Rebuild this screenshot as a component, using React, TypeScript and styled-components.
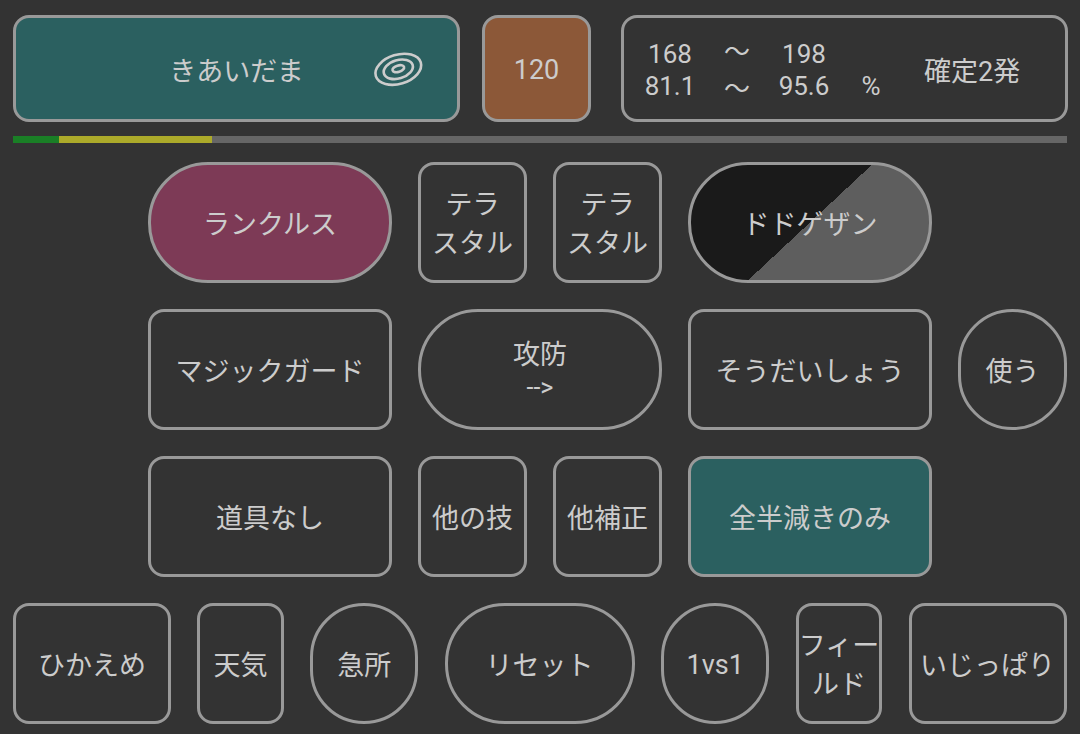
import React from "react";
import styled, { createGlobalStyle } from "styled-components";

const Global = createGlobalStyle`
  html, body { margin: 0; padding: 0; background: #333333; }
  body { font-family: Roboto, "Noto Sans CJK JP", sans-serif; color: #cccccc; }
  * { box-sizing: border-box; }
`;

const Page = styled.div`
  width: 1080px;
  height: 734px;
  padding: 15px 13px 0;
  display: flex;
  flex-direction: column;
  overflow: hidden;
`;

const TopRow = styled.div`
  display: flex;
  height: 107px;
`;

const Row = styled.div<{ $indent?: number; $gap?: number }>`
  display: flex;
  height: 121px;
  gap: ${(p) => p.$gap ?? 26}px;
  margin-top: 26px;
  padding-left: ${(p) => p.$indent ?? 0}px;
`;

const Button = styled.div<{ $w: number; $round?: boolean; $bg?: string; $pt?: number }>`
  flex: none;
  width: ${(p) => p.$w}px;
  height: 100%;
  padding-top: ${(p) => p.$pt ?? 6}px;
  border: 3px solid #999999;
  border-radius: ${(p) => (p.$round ? "60px" : "16px")};
  background: ${(p) => p.$bg ?? "transparent"};
  display: flex;
  align-items: center;
  justify-content: center;
  text-align: center;
  white-space: nowrap;
  font-size: 27px;
  line-height: 39px;
  color: #cccccc;
`;

const MoveButton = styled(Button)`
  position: relative;
`;

const MoveIcon = styled.svg`
  position: absolute;
  left: 356px;
  top: 33px;
  width: 52px;
  height: 38px;
`;

const PowerButton = styled(Button)`
  margin-left: 22px;
`;

const DamagePanel = styled(Button)`
  margin-left: 30px;
  justify-content: flex-start;
`;

const DamageGrid = styled.div`
  display: grid;
  grid-template-columns: repeat(4, 67px);
  margin-left: 12.5px;
  font-size: 26px;
  line-height: 32px;
`;

const Cell = styled.span`
  text-align: center;
`;

const Wave = styled(Cell)<{ $dy: number }>`
  transform: translateY(${(p) => p.$dy}px);
`;

const Verdict = styled.span`
  margin-left: 19.5px;
  padding-top: 6px;
`;

const HpBar = styled.div`
  display: flex;
  height: 7px;
  margin-top: 14px;
  margin-bottom: -7px;
  background: #666666;
`;

const HpSegment = styled.div<{ $w: number; $c: string }>`
  width: ${(p) => p.$w}px;
  background: ${(p) => p.$c};
`;

const Stack = styled.div`
  display: flex;
  flex-direction: column;
  align-items: center;
  margin-top: -5px;
`;

const ArrowLine = styled.span`
  margin-top: -1px;
  font-size: 25px;
  line-height: 28px;
`;

const SplitButton = styled(Button)`
  background: linear-gradient(137deg, #1a1a1a 0 50%, #5e5e5e 50% 100%);
`;

export default function App() {
  return (
    <Page>
      <Global />
      <TopRow>
        <MoveButton $w={447} $bg="#2b6060" $pt={8}>
          <span>きあいだま</span>
          <MoveIcon viewBox="0 0 52 38" fill="none" stroke="#cccccc" strokeWidth="2.6">
            <ellipse cx="26.3" cy="18.3" rx="23.5" ry="14.6" transform="rotate(-17 26.3 18.3)" />
            <ellipse cx="26.3" cy="18.3" rx="15" ry="9.2" transform="rotate(-17 26.3 18.3)" />
            <ellipse cx="26.3" cy="17.7" rx="6" ry="3.2" transform="rotate(-17 26.3 17.7)" />
          </MoveIcon>
        </MoveButton>
        <PowerButton $w={109} $bg="#8c5838" $pt={4}>120</PowerButton>
        <DamagePanel $w={447} $pt={2}>
          <DamageGrid>
            <Cell>168</Cell>
            <Wave $dy={-2}>〜</Wave>
            <Cell>198</Cell>
            <Cell />
            <Cell>81.1</Cell>
            <Wave $dy={3}>〜</Wave>
            <Cell>95.6</Cell>
            <Cell>%</Cell>
          </DamageGrid>
          <Verdict>確定2発</Verdict>
        </DamagePanel>
      </TopRow>
      <HpBar>
        <HpSegment $w={46} $c="#1a7f26" />
        <HpSegment $w={153} $c="#acaa2a" />
      </HpBar>
      <Row $indent={135}>
        <Button $w={244} $round $bg="#7d3a56">ランクルス</Button>
        <Button $w={109} $pt={4}>テラ<br />スタル</Button>
        <Button $w={109} $pt={4}>テラ<br />スタル</Button>
        <SplitButton $w={244} $round>ドドゲザン</SplitButton>
      </Row>
      <Row $indent={135}>
        <Button $w={244}>マジックガード</Button>
        <Button $w={244} $round $pt={4}>
          <Stack>
            <span>攻防</span>
            <ArrowLine>--&gt;</ArrowLine>
          </Stack>
        </Button>
        <Button $w={244}>そうだいしょう</Button>
        <Button $w={109} $round>使う</Button>
      </Row>
      <Row $indent={135}>
        <Button $w={244}>道具なし</Button>
        <Button $w={109}>他の技</Button>
        <Button $w={109}>他補正</Button>
        <Button $w={244} $bg="#2b6060">全半減きのみ</Button>
      </Row>
      <Row $gap={26.4}>
        <Button $w={158}>ひかえめ</Button>
        <Button $w={86.4}>天気</Button>
        <Button $w={108} $round>急所</Button>
        <Button $w={190} $round>リセット</Button>
        <Button $w={108.4} $round $pt={4}>1vs1</Button>
        <Button $w={86.4} $pt={4}>フィー<br />ルド</Button>
        <Button $w={158}>いじっぱり</Button>
      </Row>
    </Page>
  );
}
